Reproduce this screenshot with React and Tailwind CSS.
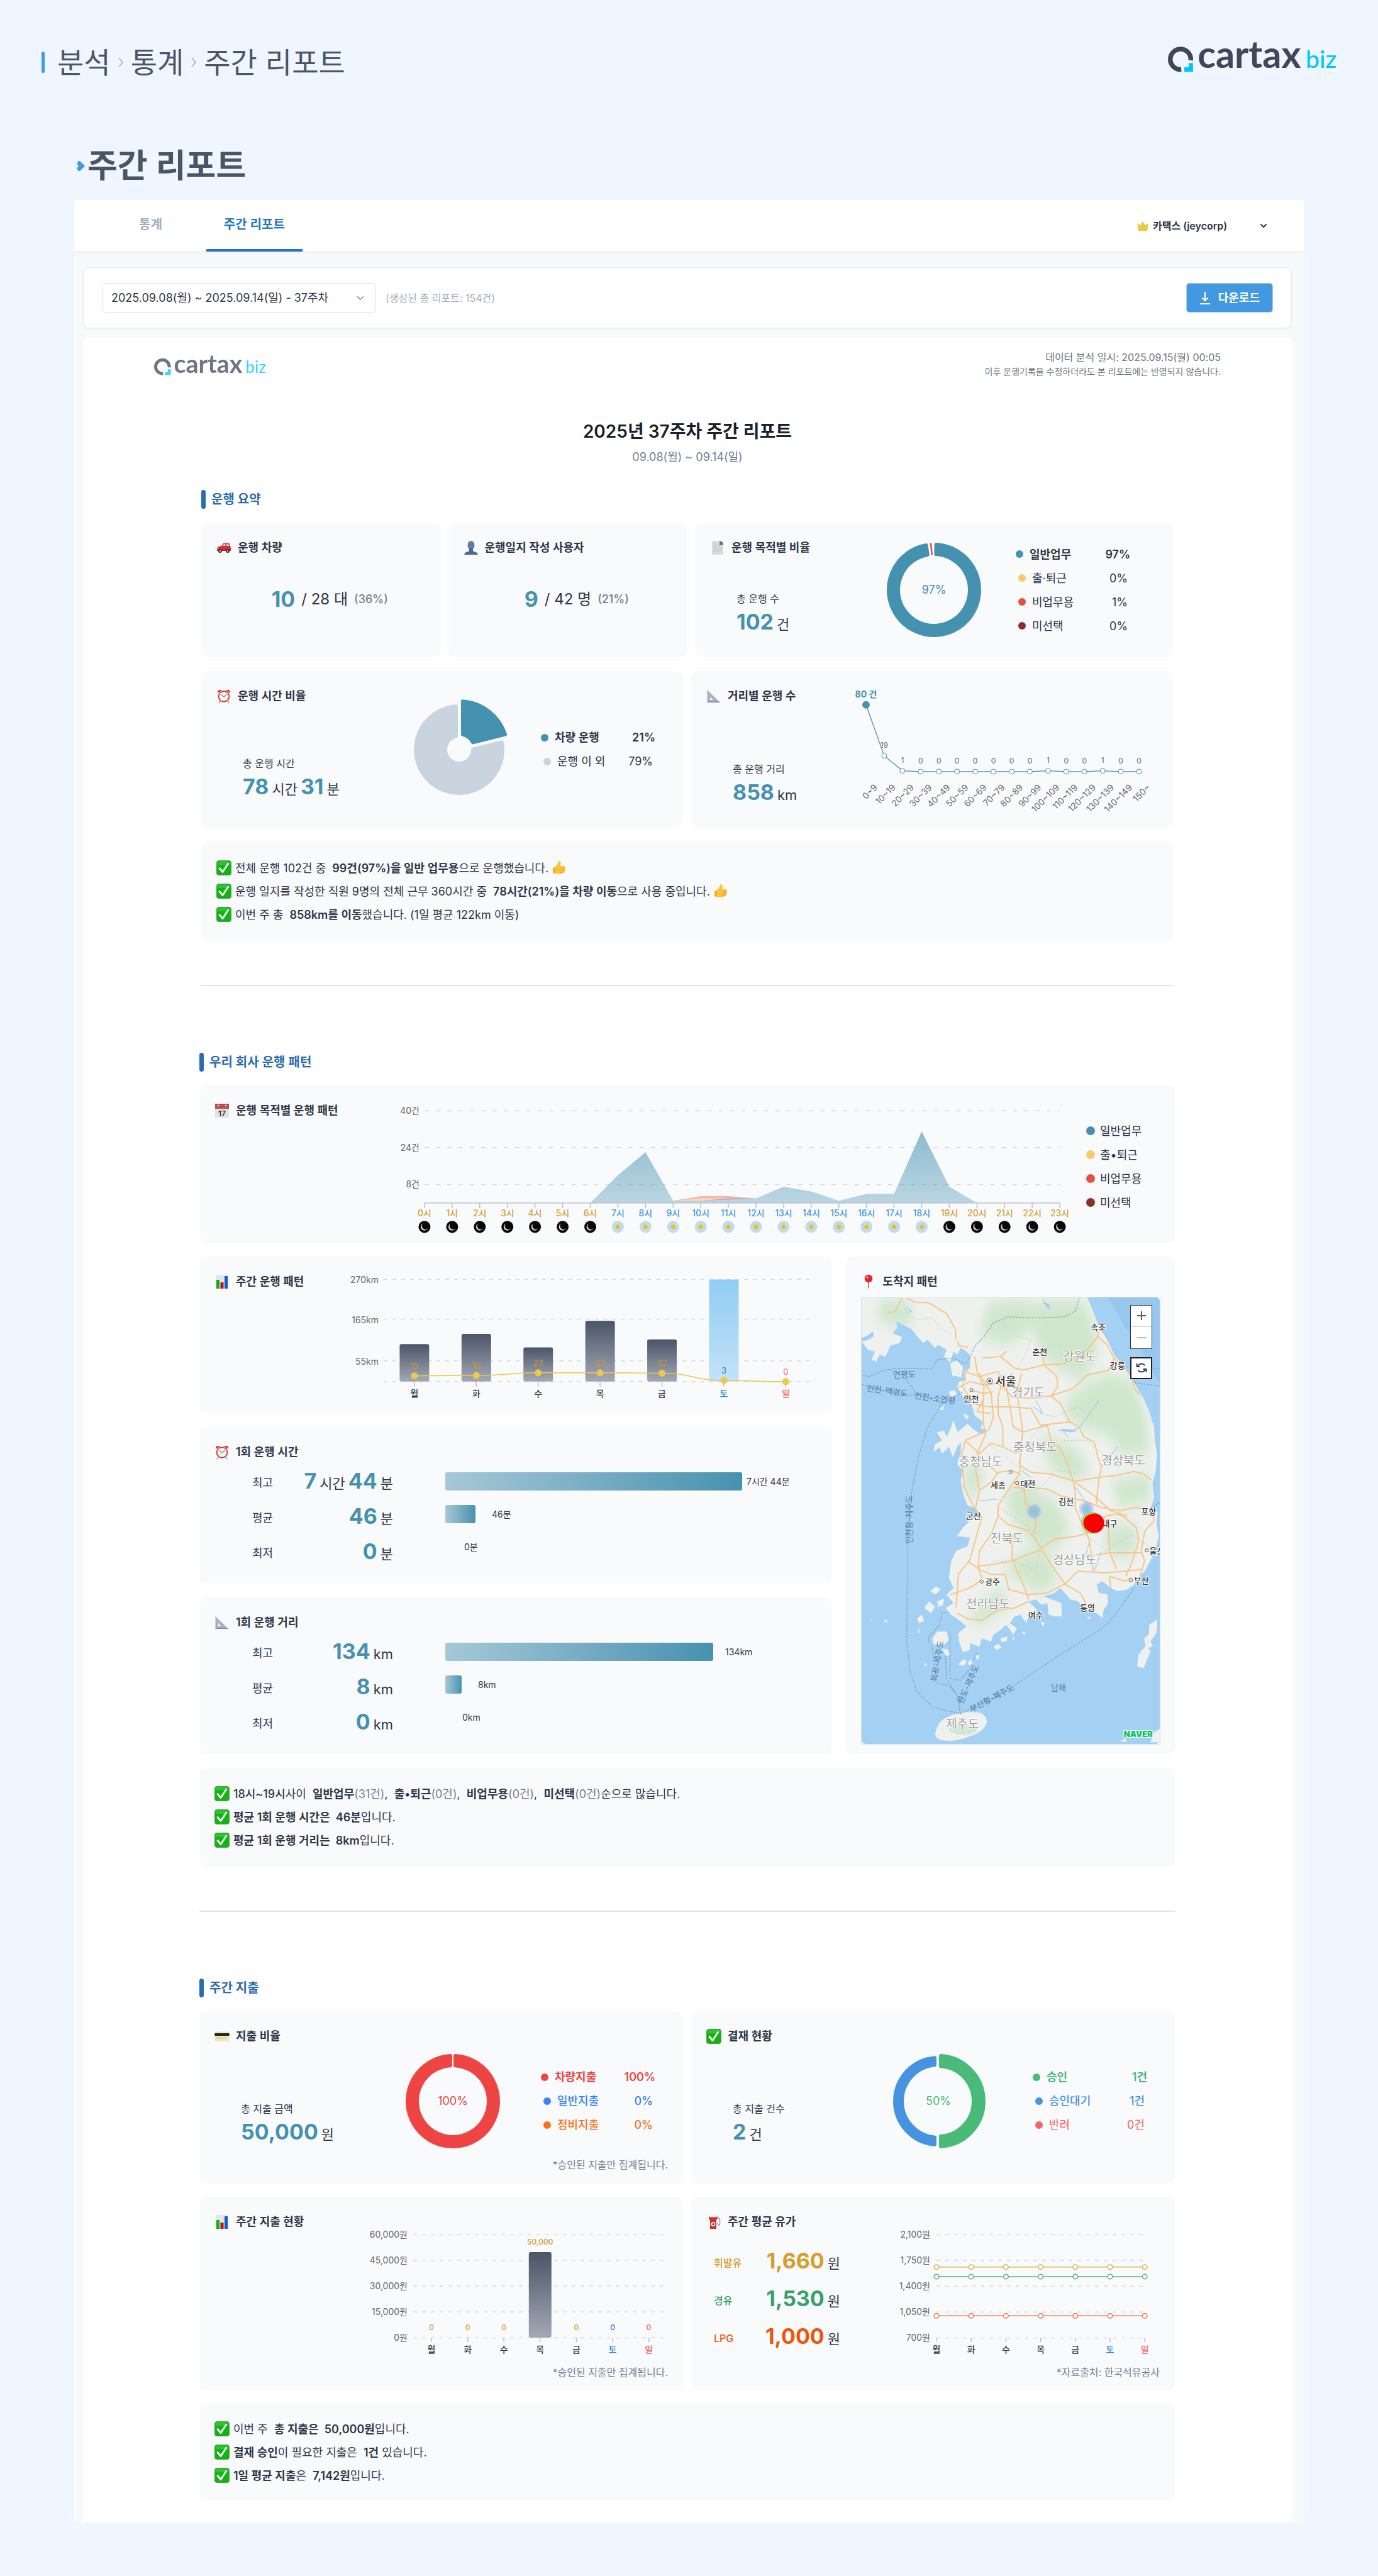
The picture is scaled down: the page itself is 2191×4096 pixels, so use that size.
import React, { useState } from "react";
import { ChevronDown } from "lucide-react";

const TEAL = "#4592b0";
const GRID = "#d9d9d9";
const days = ["월", "화", "수", "목", "금", "토", "일"];

const dayColor = (i, base = "#2d3748") =>
  i === 5 ? "#3182ce" : i === 6 ? "#f56565" : base;

/* ---------- icons ---------- */

const icons = {
  car: (
    <>
      <path d="M1 14q0-3 3-4l4-1 3-4q1-1 3-1h4q2 0 3 2l1 4q1 1 1 3v3q0 1-1 1H2q-1 0-1-1z" fill="#e8262a" />
      <path d="M9.500 9l2.500-3q.5-.7 1.500-.7h1V9zM16 5.300h1.700q1 0 1.500 1L20.500 9H16z" fill="#9fd4ee" />
      <path d="M1 15h22v1.500H1z" fill="#a8181b" />
      <circle cx="6" cy="17" r="3" fill="#2b2b2b" />
      <circle cx="6" cy="17" r="1.300" fill="#c9c9c9" />
      <circle cx="18" cy="17" r="3" fill="#2b2b2b" />
      <circle cx="18" cy="17" r="1.300" fill="#c9c9c9" />
      <circle cx="2.500" cy="13" r="1" fill="#ffe08a" />
    </>
  ),
  user: (
    <>
      <ellipse cx="12" cy="8" rx="5.500" ry="7" fill="#5b7fa6" />
      <path d="M9 13h6v3.500q0 1 2 1.500 5 1 6 5H1q1-4 6-5 2-.5 2-1.500z" fill="#48699a" />
    </>
  ),
  page: (
    <>
      <path d="M3 1h12l6 6v16H3z" fill="#dcdcdc" />
      <path d="M15 1q1 5-1 8 3-2 7-2 0-5-6-6z" fill="#6d6d6d" />
      <path d="M5 6h6M5 9h7M5 12h14M5 15h14M5 18h12" stroke="#bdbdbd" />
    </>
  ),
  clock: (
    <>
      <path d="M2 7q-1-4 3-5 3-.5 4 1zM22 7q1-4-3-5-3-.5-4 1z" fill="#d2352f" />
      <path d="M6 20l-2 3M18 20l2 3" stroke="#9c9c9c" strokeWidth="1.500" />
      <circle cx="12" cy="12.500" r="9.300" fill="#d2352f" />
      <circle cx="12" cy="12.500" r="7.500" fill="#f3f1ec" />
      <path d="M7.500 9.500L12 13l5-4" fill="none" stroke="#8a8a8a" strokeWidth="1.200" />
    </>
  ),
  ruler: (
    <>
      <path d="M1.500 2v20H22z M6 13l5 5H6z" fill="#a9b0c8" fillRule="evenodd" />
      <path d="M1.500 20.500h19L22 22H1.500z" fill="#83889f" />
    </>
  ),
  check: (
    <>
      <rect x="0.500" y="0.500" width="23" height="23" rx="3.500" fill="#12b312" stroke="#4f9d4f" />
      <path d="M1.500 4q0-2.500 2.500-2.500h16q2.500 0 2.500 2.500v3h-21z" fill="#3fd03f" opacity=".6" />
      <path d="M5 12.500l5 6 8.500-13" fill="none" stroke="#fff" strokeWidth="2.800" strokeLinecap="round" strokeLinejoin="round" />
    </>
  ),
  thumb: (
    <>
      <path d="M2 12q4-1 6-4t3-6q2-2 3.500.5.800 2-.5 6.500h5.500q2.500.3 2 2.500 1.200 1.500.2 3 .4 2-1 3-.2 2-1.700 2.500-5 2.500-10 1.500L2 20z" fill="#fdc33a" />
      <path d="M15 13h6M14.500 16h6M14 19h5" stroke="#dc9419" strokeWidth=".9" />
      <path d="M2 12l4-1.500V21.200L2 20z" fill="#f7ae27" />
    </>
  ),
  calendar: (
    <>
      <rect x="1" y="1" width="22" height="22" fill="#e2e2e2" />
      <path d="M1 1h22v8H1z" fill="#b9504f" />
      <circle cx="6" cy="4" r="1.300" fill="#f6dcdc" />
      <circle cx="18" cy="4" r="1.300" fill="#f6dcdc" />
      <text x="12" y="20.500" textAnchor="middle" fontSize="12" fontWeight="600" fill="#333">17</text>
    </>
  ),
  chart: (
    <>
      <path d="M2 1h20v22H2z" fill="#dfe8ef" />
      <path d="M3 9h5v14H3z" fill="#0fae13" />
      <path d="M9.500 13h5v10h-5z" fill="#c80f16" />
      <path d="M16 3h5v20h-5z" fill="#1559c9" />
    </>
  ),
  pin: (
    <>
      <path d="M11 10h2v12l-1 1.500-1-1.500z" fill="#9b8b80" />
      <circle cx="12" cy="7" r="6.300" fill="#e3282b" />
      <circle cx="10" cy="5" r="1.800" fill="#ff9c9c" />
    </>
  ),
  card: (
    <>
      <rect x="0.500" y="4.500" width="23" height="15" rx="1" fill="#efe6b8" />
      <path d="M.5 7h23v4H.5z" fill="#1d1d1d" />
      <path d="M3 14.500h16" stroke="#b5ad8d" strokeWidth="1.500" strokeDasharray="2 1" />
    </>
  ),
  fuel: (
    <>
      <path d="M4 2h13l1 5-2 2v14H6V9L4 7z" fill="#d42c30" />
      <path d="M4.500 2h12l.3 2.500H4.800z" fill="#eeeeee" />
      <circle cx="11" cy="15.500" r="3.300" fill="#fff" />
      <circle cx="11" cy="15.500" r="1.500" fill="#222" />
      <path d="M18 5q4 1 3.500 5v6q-1 2-2.500 1l-1.500-3" fill="none" stroke="#9a9a9a" strokeWidth="1.500" />
    </>
  ),
};

const Icon = ({ name, className = "" }) => (
  <svg viewBox="0 0 24 24" className={"w-6 h-6 shrink-0 " + className} aria-hidden="true">
    {icons[name]}
  </svg>
);

const Logo = ({ className }) => (
  <svg viewBox="12 11 329 100" className={"overflow-visible " + className} role="img" aria-label="cartax biz">
    <path d="M56.500 57.500A20 20 0 1 0 38 75.500" fill="none" stroke="#41465a" strokeWidth="9.200" />
    <path d="M52.500 63H61v17H44v-9h8.500z" fill="#00c6ff" />
    <text x="70" y="73" fontFamily="Lato, sans-serif" fontWeight="700" fontSize="73" fill="#41465a">
      cartax
    </text>
    <text x="281" y="73" fontFamily="Lato, sans-serif" fontWeight="500" fontSize="48" fill="#00c6ff">
      biz
    </text>
  </svg>
);

/* ---------- building blocks ---------- */

const CardTitle = ({ icon, children }) => (
  <h4 className="flex items-center gap-[10px] mt-[27px] h-[26px] text-[18px] leading-[26px] font-semibold text-[#2d3748] whitespace-nowrap">
    <Icon name={icon} />
    {children}
  </h4>
);

const SectionTitle = ({ children }) => (
  <h3 className="flex items-center gap-[9px] h-[30px] mb-[22px] text-[20px] leading-[30px] font-semibold text-[#2b6cb0]">
    <span className="w-[7px] h-full rounded-full bg-[#2b6cb0]" />
    {children}
  </h3>
);

const Num = ({ children, color = "text-[#4592b0]" }) => (
  <span className={"text-[34px] font-bold " + color}>{children}</span>
);

const Unit = ({ children }) => (
  <span className="text-[22px] text-[#2d3748] mx-[5px]">{children}</span>
);

const Stat = ({ label, className, children }) => (
  <div className={"pl-[42px] " + className}>
    <div className="text-[16px] leading-6 text-[#2d3748]">{label}</div>
    <div className="mt-[3px] leading-[44px] whitespace-nowrap">{children}</div>
  </div>
);

const Legend = ({ rows }) => (
  <ul className="w-[182px] shrink-0 text-[18px] text-[#2d3748]">
    {rows.map(([label, value, dot, text], i) => (
      <li
        key={label}
        className={
          "flex items-center gap-[10px] h-[38px] " +
          (i === 0 ? "font-semibold " : "px-1 ") +
          (text || "")
        }
      >
        <span className={"w-3 h-3 rounded-full " + dot} />
        <span>{label}</span>
        <span className="ml-auto">{value}</span>
      </li>
    ))}
  </ul>
);

const Summary = ({ className, children }) => (
  <ul
    className={
      "flex flex-col justify-center px-6 rounded-xl bg-[#f9fafc] text-[18px] text-[#2d3748] " +
      className
    }
  >
    {React.Children.map(children, (line) => (
      <li className="flex items-center gap-[6px] min-h-[37px]">
        <Icon name="check" />
        <span>{line}</span>
      </li>
    ))}
  </ul>
);

const Divider = () => <hr className="mt-[70px] mb-[106px] border-0 h-[2px] bg-[#e2e4e7]" />;

// Ring segment between two angles (degrees), pad is the inset in px on every side
const sector = (c, r0, r1, from, to, pad) => {
  const rad = (d) => ((d - 90) * Math.PI) / 180;
  const inner = r0 + 3;
  const outer = r1 - 3;
  const pt = (r, a) => `${c + r * Math.cos(a)} ${c + r * Math.sin(a)}`;
  const a = (r, d, s) => rad(d) + (s * pad) / r;
  const big = to - from > 180 ? 1 : 0;
  return `M${pt(outer, a(outer, from, 1))}A${outer} ${outer} 0 ${big} 1 ${pt(outer, a(outer, to, -1))}L${pt(inner, a(inner, to, -1))}A${inner} ${inner} 0 ${big} 0 ${pt(inner, a(inner, from, 1))}Z`;
};

const Donut = ({ segments, sliver, label, color }) => (
  <svg viewBox="0 0 160 160" className="w-40 h-40 shrink-0">
    {segments.map(([r0, r1, from, to, pad, fill]) => (
      <path
        key={from}
        d={sector(80, r0, r1, from, to, pad)}
        fill={fill}
        stroke={fill}
        strokeWidth="6"
        strokeLinejoin="round"
      />
    ))}
    {sliver && <path d="M75 5.500l1.800 19" stroke={sliver} strokeWidth="2.500" />}
    {label && (
      <text x="80" y="86" textAnchor="middle" fontSize="18" fill={color}>
        {label}
      </text>
    )}
  </svg>
);

/* ---------- charts ---------- */

const DistanceChart = () => {
  const counts = [80, 19, 1, 0, 0, 0, 0, 0, 0, 0, 1, 0, 0, 1, 0, 0];
  const labels = counts.map((_, i) =>
    i === 15 ? "150~" : i === 0 ? "0~9" : `${i * 10}~${i * 10 + 9}`
  );
  const x = (i) => 27 + i * 29;
  const y = (v) => 160 - v * 1.33;
  return (
    <svg viewBox="0 0 500 249" className="flex-1 min-w-0">
      <polyline
        points={counts.map((v, i) => `${x(i)},${y(v)}`).join(" ")}
        fill="none"
        stroke={TEAL}
        strokeWidth="1.300"
      />
      {counts.map((v, i) => (
        <g key={i}>
          <circle cx={x(i)} cy={y(v)} r={i ? 4 : 5.5} fill={i ? "#fff" : TEAL} stroke={TEAL} />
          <text
            x={x(i)}
            y={y(v) - (i ? 13 : 12)}
            textAnchor="middle"
            fontSize={i ? 12 : 14}
            fontWeight={i ? 400 : 700}
            fill={i ? "#666" : TEAL}
          >
            {i ? v : "80 건"}
          </text>
          <text
            transform={`translate(${x(i) + 19} 186) rotate(-45)`}
            textAnchor="end"
            fontSize="14"
            fill="#6b6b6b"
          >
            {labels[i]}
          </text>
        </g>
      ))}
    </svg>
  );
};

const PurposeChart = () => {
  const work = [0, 0, 0, 0, 0, 0, 0, 12, 22, 1, 1, 2, 2, 7, 5, 1, 4, 4, 31, 7, 0, 0, 0, 0];
  const x = (i) => 55 + i * 43.96;
  const y = (v) => 187 - v * 3.675;
  const area = work.map((v, i) => `${x(i)},${y(v)}`).join(" ");
  const night = (i) => i < 7 || i > 18;
  return (
    <svg viewBox="0 0 1100 250" className="flex-1 min-w-0">
      <defs>
        <linearGradient id="work" x1="0" y1="0" x2="0" y2="1">
          <stop offset="0" stopColor="#4592b0" stopOpacity=".6" />
          <stop offset="1" stopColor="#4592b0" stopOpacity=".35" />
        </linearGradient>
      </defs>
      {[40, 24, 8].map((v) => (
        <g key={v}>
          <path d={`M55 ${y(v)}H1066`} stroke={GRID} strokeWidth="1.500" strokeDasharray="7 11" />
          <text x="47" y={y(v) + 5} textAnchor="end" fontSize="14" fill="#666">
            {v}건
          </text>
        </g>
      ))}
      <polygon points={`${x(9)},${y(1)} ${x(10)},${y(3)} ${x(11)},${y(3)} ${x(12)},${y(2)} ${x(10)},${y(1)}`} fill="#f3b9b2" />
      <polygon points={`${x(9)},${y(1)} ${x(10)},${y(2)} ${x(11)},${y(2)} ${x(10)},${y(1)}`} fill="#fbdcae" />
      <polygon points={`${area} ${x(23)},187 ${x(0)},187`} fill="url(#work)" />
      <path d="M55 187H1066" stroke="#b9bfcc" strokeWidth="1.500" />
      {work.map((_, i) => (
        <g key={i}>
          <path d={`M${x(i)} 187v8`} stroke="#b9bfcc" strokeWidth="1.500" />
          <text
            x={x(i)}
            y="208"
            textAnchor="middle"
            fontSize="14"
            fontWeight="500"
            fill={night(i) ? "#d69e2e" : "#4299e1"}
          >
            {i}시
          </text>
          {night(i) ? (
            <g transform={`translate(${x(i)} 225)`}>
              <circle r="9.500" fill="#05060f" />
              <path d="M-2.500-5.500A6 6 0 1 0 5.500 2.500 5 5 0 0 1-2.500-5.500z" fill="#f0d78c" />
            </g>
          ) : (
            <g transform={`translate(${x(i)} 225)`}>
              <circle r="9.500" fill="#b5dcfa" />
              <circle r="5.800" fill="none" stroke="#f5d98a" strokeWidth="2.500" strokeDasharray="1.500 3.050" />
              <circle r="3.400" fill="#fbb916" />
            </g>
          )}
        </g>
      ))}
    </svg>
  );
};

const WeekChart = () => {
  const km = [99, 126, 90.5, 160.5, 111.5, 270, 0];
  const trips = [15, 16, 23, 23, 22, 3, 0];
  const x = (i) => 119 + i * 98.5;
  const y = (v) => 199 - v * 0.602;
  const py = (v) => 199 - v * 0.61;
  const line = trips.reduce((d, v, i) => {
    if (!i) return `M${x(0)} ${py(v)}`;
    const m = (x(i) + x(i - 1)) / 2;
    return `${d}C${m} ${py(trips[i - 1])} ${m} ${py(v)} ${x(i)} ${py(v)}`;
  }, "");
  return (
    <svg viewBox="0 0 760 249" className="flex-1 min-w-0">
      <defs>
        <linearGradient id="dark" x1="0" y1="0" x2="0" y2="1">
          <stop offset="0" stopColor="#4a5568" />
          <stop offset="1" stopColor="#a3a8b4" />
        </linearGradient>
        <linearGradient id="sky" x1="0" y1="0" x2="0" y2="1">
          <stop offset="0" stopColor="#90cdf4" />
          <stop offset="1" stopColor="#c3e2f7" />
        </linearGradient>
      </defs>
      {[270, 165, 55, 0].map((v) => (
        <g key={v}>
          <path d={`M70 ${y(v)}H757`} stroke={GRID} strokeWidth="1.500" strokeDasharray="6 8" />
          {v > 0 && (
            <text x="62" y={y(v) + 6} textAnchor="end" fontSize="14" fill="#666">
              {v}km
            </text>
          )}
        </g>
      ))}
      {days.map((d, i) => (
        <g key={d}>
          <path d={`M${x(i)} 199v8`} stroke="#b9bfcc" strokeWidth="1.500" />
          {km[i] > 0 && (
            <rect
              x={x(i) - 23.5}
              y={y(km[i])}
              width="47"
              height={199 - y(km[i])}
              rx="3"
              fill={i === 5 ? "url(#sky)" : "url(#dark)"}
            />
          )}
          <text x={x(i)} y="223" textAnchor="middle" fontSize="14" fontWeight="500" fill={dayColor(i)}>
            {d}
          </text>
        </g>
      ))}
      <path d={line} fill="none" stroke="#ecc94b" strokeWidth="1.500" />
      {trips.map((v, i) => (
        <g key={i}>
          <circle cx={x(i)} cy={py(v)} r="5.500" fill="#ecc94b" />
          <text x={x(i)} y={py(v) - 11} textAnchor="middle" fontSize="13" fill={dayColor(i, "#c9973a")}>
            {v}
          </text>
        </g>
      ))}
    </svg>
  );
};

const SpendChart = () => {
  const x = (i) => 106 + i * 57.6;
  return (
    <svg viewBox="0 0 482 267" className="w-full">
      {["60,000", "45,000", "30,000", "15,000", "0"].map((v, i) => (
        <g key={v}>
          <path d={`M77 ${60 + i * 41}H480`} stroke={GRID} strokeWidth="1.500" strokeDasharray="6 8" />
          <text x="68" y={65 + i * 41} textAnchor="end" fontSize="14" fill="#666">
            {v}원
          </text>
        </g>
      ))}
      <rect x={x(3) - 18} y="88" width="36" height="136" rx="3" fill="url(#dark)" />
      {days.map((d, i) => (
        <g key={d}>
          <path d={`M${x(i)} 224v7`} stroke="#b9bfcc" strokeWidth="1.500" />
          <text
            x={x(i)}
            y={i === 3 ? 76 : 212}
            textAnchor="middle"
            fontSize="12"
            fontWeight="500"
            fill={dayColor(i, "#d69e2e")}
          >
            {i === 3 ? "50,000" : "0"}
          </text>
          <text x={x(i)} y="248" textAnchor="middle" fontSize="14" fontWeight="500" fill={dayColor(i)}>
            {d}
          </text>
        </g>
      ))}
    </svg>
  );
};

const FuelChart = () => {
  const x = (i) => 81 + i * 55.2;
  const y = (v) => 224.4 - (v - 700) * 0.1174;
  const series = [
    [1660, "#e2b04d"],
    [1530, "#58b47f"],
    [1000, "#ee7a4a"],
  ];
  return (
    <svg viewBox="0 0 436 267" className="w-full">
      {[2100, 1750, 1400, 1050, 700].map((v) => (
        <g key={v}>
          <path d={`M81 ${y(v)}H412`} stroke={GRID} strokeWidth="1.500" strokeDasharray="6 8" />
          <text x="71" y={y(v) + 5} textAnchor="end" fontSize="14" fill="#666">
            {v.toLocaleString("en-US")}원
          </text>
        </g>
      ))}
      {series.map(([v, color]) => (
        <g key={v} stroke={color} strokeWidth="1.500">
          <path d={`M81 ${y(v)}H412`} />
          {days.map((d, i) => (
            <circle key={d} cx={x(i)} cy={y(v)} r="3.800" fill="#fff" />
          ))}
        </g>
      ))}
      {days.map((d, i) => (
        <g key={d}>
          <path d={`M${x(i)} 224v7`} stroke="#b9bfcc" strokeWidth="1.500" />
          <text x={x(i)} y="248" textAnchor="middle" fontSize="14" fontWeight="500" fill={dayColor(i)}>
            {d}
          </text>
        </g>
      ))}
    </svg>
  );
};

/* ---------- map ---------- */

const land =
  "M138 174H1100L1125 215 1150 262 1185 300 1215 345 1250 375 1285 410 1310 440 1340 475 1365 515 1385 560 1388 600 1398 640 1392 690 1378 730 1385 770 1372 800 1400 815 1395 850 1405 885 1390 930 1368 960 1345 990 1325 1005 1300 1030 1270 1045 1230 1050 1200 1040 1165 1020 1140 1030 1150 1055 1185 1058 1190 1085 1170 1105 1165 1130 1140 1115 1120 1112 1080 1095 1060 1080 1030 1075 1010 1060 985 1040 960 1055 915 1065 950 1075 990 1085 992 1125 965 1125 935 1120 930 1085 905 1090 880 1075 850 1080 885 1105 880 1130 850 1125 840 1145 815 1120 790 1125 770 1145 800 1160 785 1180 755 1150 730 1165 700 1180 690 1200 650 1190 640 1215 600 1205 600 1225 570 1232 555 1205 550 1175 585 1155 560 1140 520 1120 495 1100 530 1085 500 1060 530 1040 510 1010 520 960 540 930 590 915 600 890 545 885 570 860 600 840 640 825 620 800 590 795 570 760 560 720 570 690 545 670 560 640 562 605 545 620 528 650 510 620 480 640 470 620 445 635 450 612 480 600 458 575 490 572 500 590 520 560 528 540 548 575 590 550 610 565 640 580 665 575 680 570 645 565 655 545 620 525 610 500 600 480 570 470 545 440 555 425 585 420 575 395 600 382 600 345 575 330 560 325 545 345 530 335 515 368 490 350 500 330 465 315 450 325 420 300 400 310 375 290 350 268 300 250 285 245 290 265 270 280 310 292 300 310 260 318 240 350 215 345 200 365 180 360 195 335 165 330 138 305 170 300 190 290 185 275 170 285 138 295Z";

const islands =
  "M515 370l30-8 25 20 -5 30-40-5zM470 505l20-8-5 14zM510 455l25-5 10 15-25 5zM570 520l25 8-10 12zM440 1190l20-20 40 0 10 25-20 15-45-2zM405 1100l20-20 25 15-15 20zM375 1130l20-10 10 18-22 8zM430 1050l25-15 20 10-20 14zM460 1080l30-8-5 20-20 5zM590 1262l15-8 12 10-18 8zM620 1242l20-2-6 16zM700 1215l20-8 15 10-22 8zM730 1190l30-5-4 14-22 2zM550 1268l22-16 15 8-14 12zM480 1220l25 4 10 15-18 4zM900 1140l20 4-8 12zM820 1170l18 3-6 8zM230 1140l14-6 5 10zM170 1133l8 0 0 6zM405 1262l12 6-10 6zM1240 1495l28-6-6 12zM1370 1500l15-30 24-10v40zM1365 1150l34-16-4 40-25 25 10 15-20 5 10 10-30 50-27-5 5-35 30-25-5-25 20-10zM1100 1125l14 2-6 8zM780 1185l12 4-8 6zM380 1160l8 8-6 8z";

const hills = [
  "M980 180L1100 190 1150 330 1080 420 1000 400 900 340 860 250 880 190Z",
  "M1020 470L1180 400 1290 420 1350 520 1360 640 1260 650 1180 580 1100 570 1000 520Z",
  "M680 190L860 180 870 260 760 320 640 290Z",
  "M1200 720L1360 700 1370 780 1240 800Z",
  "M820 720L960 780 1030 860 960 930 860 910 770 820 750 760Z",
  "M800 940L920 930 980 1010 900 1060 820 1020 740 1000Z",
  "M1170 860L1320 850 1290 950 1190 940Z",
  "M900 580L1050 620 1120 700 1020 720 930 670Z",
  "M220 180L360 190 340 270 200 240Z",
  "M580 1130L720 1040 780 1090 640 1150Z",
  "M570 700L630 650 660 720 600 780Z",
];

const roads =
  "M248 223L282 215 308 176M332 176L365 188 425 190 500 222 538 270 540 298M548 303L552 318 592 322M620 350L630 395 660 440 655 500 658 555 668 580 630 640 690 680 720 700M650 355L730 350 755 335M730 350L790 385 830 390 915 375 910 345M915 375L1000 372 1100 330 1145 290 1145 265M1145 290L1185 315 1215 355 1260 385 1290 410 1300 445 1325 465M915 375L970 410 975 440 945 468 985 490 1025 545 1065 560 1085 590 1130 605 1145 650 1160 680 1150 715 1138 790M945 468L1040 445 1100 405 1190 392 1215 355M580 395L640 410 720 395 740 420 720 470 720 520 740 560 740 620M545 445L600 425 660 435 720 430 780 470 860 475 945 468M600 380L580 400 570 440 610 490 680 500 770 500 860 505 900 555 1025 545M780 400L755 440 770 500 785 560 825 575 930 555 945 600 985 625 1010 660 1040 720 1050 760 1048 800 1085 860 1110 900 1125 990M820 400L800 460 815 520 825 575 815 640 812 700 785 725 720 795 720 825 690 880 640 930 635 980 650 1010M600 450L660 460 700 455M640 400L690 460 700 530 680 570M655 480L630 515 690 520M580 600L640 640 690 608 740 620 800 640M580 600L630 585 665 575M580 600L565 640 570 690 575 740 610 790 640 820 650 830 600 955 550 1000 545 1060 540 1100M625 690L640 750 690 725 720 695 780 690 812 700M625 690L620 650M640 750L625 800M812 675L860 695 940 700 1045 722 1150 710 1220 705 1300 693 1340 700 1372 718M785 725L830 745 840 790 880 820 880 860 870 880M785 740L930 745 985 765 1085 780 1160 800 1240 810 1300 800 1375 805M1048 725L1130 765 1200 810 1270 825M720 825L760 850 850 870 905 920 960 895 1060 885 1130 870 1180 825 1230 820 1260 830 1310 860 1320 900 1290 965 1265 1005M905 925L830 945 780 960 700 970 635 975M905 925L950 975 1005 1028 1070 1055 1095 1085M780 880L780 955 830 1035 850 1075M590 960L640 985 690 1000 750 1000 765 1045 850 1060 930 1055 1005 1028 1060 990 1170 995 1265 990 1330 985M515 1060L600 1040 650 1015M545 1115L590 1132 650 1137 720 1105 790 1100 850 1080M1190 850L1195 930 1225 985M1100 945L1200 935 1330 935 1345 870 1385 840 1380 800M1330 930L1345 960 1325 1005M1200 1040L1195 1005 1260 1020 1290 1010";

const routes =
  "M138 405L170 410 240 390 300 385 440 385 460 360 530 355 580 372 600 355 620 320 660 290 700 250 760 232 900 235 1000 232 1050 215 1066 176M138 433L230 452 330 465 380 465M330 420L370 460 480 490 570 455M480 490L420 560 380 650 350 760 335 900 332 1060 330 1200 345 1290 375 1350 440 1395 558 1415 700 1370 780 1335 960 1250 1170 1158 1230 1110 1300 1040M558 1415L555 1370 510 1330 460 1325 440 1220 420 1190 470 1150 480 1115 510 1112M558 1415L545 1360 500 1310 495 1240M515 1310L560 1315 600 1280 630 1230M515 1310L515 1170M1240 380L1409 387M1300 428L1409 438M1380 800L1409 785";

const mapX = (x) => (x - 138) * 0.3739;
const mapY = (y) => (y - 174) * 0.5349;

const provinces = [
  ["강원도", 1067, 351],
  ["경기도", 849, 457],
  ["충청북도", 878, 621],
  ["충청남도", 646, 663],
  ["경상북도", 1254, 660],
  ["전북도", 758, 892],
  ["경상남도", 1046, 955],
  ["전라남도", 677, 1087],
  ["제주도", 568, 1445],
];

const cities = [
  ["속초", 1147, 262],
  ["춘천", 898, 336],
  ["강릉", 1229, 377],
  ["인천", 606, 475],
  ["세종", 720, 733],
  ["대전", 847, 729],
  ["김천", 1010, 781],
  ["군산", 615, 824],
  ["포항", 1362, 811],
  ["대구", 1196, 848],
  ["울산", 1397, 929],
  ["부산", 1331, 1018],
  ["광주", 696, 1021],
  ["통영", 1101, 1098],
  ["여수", 880, 1120],
];

const seaLabels = [
  ["연평도", 320, 402, 0],
  ["인천-백령도", 247, 452, 8],
  ["인천-소연평", 451, 474, 8],
  ["인천항-제주도", 340, 836, -90],
  ["목포-제주도", 460, 1258, -80],
  ["완도-제주도", 592, 1327, -66],
  ["부산항-제주도", 693, 1368, -28],
  ["남해", 978, 1336, 0],
];

const KoreaMap = () => (
  <div className="relative mt-[11px] border border-[#dcdfe3] bg-white">
    <svg viewBox="0 0 475 712" className="block w-full rounded-md bg-[#a3d0f3]">
      <defs>
        <filter id="soft" x="-30%" y="-30%" width="160%" height="160%">
          <feGaussianBlur stdDeviation="22" />
        </filter>
        <clipPath id="landClip">
          <path d={land} />
        </clipPath>
        <radialGradient id="spot">
          <stop offset="0" stopColor="#6be08a" />
          <stop offset=".3" stopColor="#7cc4e0" stopOpacity=".85" />
          <stop offset=".6" stopColor="#9aa2f4" stopOpacity=".6" />
          <stop offset="1" stopColor="#8a93f2" stopOpacity="0" />
        </radialGradient>
        <radialGradient id="hot">
          <stop offset=".74" stopColor="#ff0000" />
          <stop offset=".8" stopColor="#f6e61c" />
          <stop offset=".88" stopColor="#6fe06a" />
          <stop offset="1" stopColor="#58b7f0" stopOpacity="0" />
        </radialGradient>
      </defs>
      <g transform="scale(.3739 .5349) translate(-138 -174)">
        <path d="M1190 174H1409V430L1330 330 1250 250Z" fill="#96c7ef" />
        <path d={land} fill="#eff1ef" />
        <path d={islands} fill="#eff1ef" />
        <g clipPath="url(#landClip)">
          <g filter="url(#soft)" fill="#cfe6cc">
            {hills.map((d) => (
              <path key={d} d={d} />
            ))}
          </g>
          <g fill="none" stroke="#c5c9c6" strokeWidth="1" strokeDasharray="3 2">
            <path vectorEffect="non-scaling-stroke" d="M310 176L330 220 370 240 440 235 470 260 520 290M740 250L800 290 860 300 840 340 800 390M900 520L960 530 1060 500 1130 540M1000 600L1100 600 1180 650M680 610L740 640 800 680 830 620 900 560M780 760L900 740 970 690 1060 700M720 800L790 830 870 870 900 930 880 990 800 960 700 960 620 1040M1060 860L1180 930 1290 880 1370 920" />
          </g>
          <g fill="none" stroke="#9ccdf2" strokeWidth="1.200">
            <path vectorEffect="non-scaling-stroke" d="M910 180L940 210 920 200M330 205L350 215 335 220M880 480L910 520 870 500M975 570L1030 575 1070 560 1100 530 1150 480M1000 575L1020 590M820 690L860 710M1050 740L1100 790 1080 840 1110 900 1090 950M1160 680L1230 620M640 780L720 775M1160 930L1130 990" />
            <path strokeWidth="3" vectorEffect="non-scaling-stroke" d="M915 190L940 200M990 568L1050 572" />
          </g>
        </g>
        <path
          d="M452 1478Q455 1440 505 1424 560 1405 640 1412 672 1420 672 1440 660 1470 600 1482 540 1500 480 1494 455 1490 452 1478Z"
          fill="#eff1ef"
        />
        <ellipse cx="570" cy="1462" rx="60" ry="16" fill="#d3e8d0" />
        <path d={roads} fill="none" stroke="#f6c688" strokeWidth="2" strokeLinejoin="round" vectorEffect="non-scaling-stroke" />
        <path d={routes} fill="none" stroke="#7e9dba" strokeWidth="1.200" strokeDasharray="3 2" vectorEffect="non-scaling-stroke" />
      </g>
      <g textAnchor="middle">
        <g fontSize="19" fill="#9b9b9b" stroke="#ffffff" strokeWidth="2" paintOrder="stroke">
          {provinces.map(([name, x, y]) => (
            <text key={name} x={mapX(x)} y={mapY(y) + 7}>
              {name}
            </text>
          ))}
        </g>
        <g fontSize="13" fill="#55779a">
          {seaLabels.map(([name, x, y, angle]) => (
            <text key={name} transform={`translate(${mapX(x)} ${mapY(y)}) rotate(${angle})`} y="5">
              {name}
            </text>
          ))}
        </g>
        <g fontSize="13" fontWeight="500" fill="#333" stroke="#ffffff" strokeWidth="2" paintOrder="stroke">
          {cities.map(([name, x, y]) => (
            <text key={name} x={mapX(x)} y={mapY(y) + 5}>
              {name}
            </text>
          ))}
          <text x={mapX(752)} y={mapY(424) + 7} fontSize="18">
            서울
          </text>
        </g>
      </g>
      <g fill="#fff" stroke="#444">
        {[[606, 450], [773, 695], [801, 727], [650, 1021], [1354, 928], [1286, 1017]].map(([x, y]) => (
          <circle key={x} cx={mapX(x)} cy={mapY(y)} r="2.500" />
        ))}
        <circle cx={mapX(684)} cy={mapY(423)} r="4.500" />
        <circle cx={mapX(684)} cy={mapY(423)} r="1.800" fill="#444" />
      </g>
      <circle cx={mapX(873)} cy={mapY(812)} r="13" fill="url(#spot)" />
      <circle cx={mapX(1097)} cy={mapY(804)} r="13" fill="url(#spot)" />
      <circle cx={mapX(1120)} cy={mapY(846)} r="18" fill="url(#hot)" />
      <circle cx={mapX(1131)} cy={mapY(847)} r="15.500" fill="#ff0000" />
      <text x="441" y="701" textAnchor="middle" fontSize="13" fontWeight="900" fill="#03c75a" stroke="#fff" strokeWidth="2" paintOrder="stroke">
        NAVER
      </text>
    </svg>
    <div className="absolute top-3 right-3 w-[35px] border border-[#333] bg-white">
      <button type="button" aria-label="확대" className="flex items-center justify-center w-full h-[34px] border-b border-[#ccc]">
        <svg viewBox="0 0 14 14" className="w-[14px] h-[14px]">
          <path d="M7 0v14M0 7h14" stroke="#555" strokeWidth="2" />
        </svg>
      </button>
      <button type="button" aria-label="축소" className="flex items-center justify-center w-full h-[34px]">
        <svg viewBox="0 0 14 14" className="w-[14px] h-[14px]">
          <path d="M0 7h14" stroke="#bbb" strokeWidth="2" />
        </svg>
      </button>
    </div>
    <button
      type="button"
      aria-label="새로고침"
      className="absolute top-[95px] right-3 flex items-center justify-center w-[35px] h-[35px] border-2 border-[#222] bg-white"
    >
      <svg viewBox="0 0 18 18" className="w-[18px] h-[18px]" fill="none" stroke="#2d3748" strokeWidth="1.800">
        <path d="M1.500 2v5h5M16.500 16v-5h-5" />
        <path d="M2 7q3-4.500 7-4.500 3 0 5.500 2.500M16 11q-3 4.500-7 4.500-3 0-5.500-2.500" />
      </svg>
    </button>
  </div>
);

/* ---------- 1회 운행 ---------- */

const RunCard = ({ icon, title, values, bars }) => (
  <article className="min-h-[249px] px-6 rounded-xl bg-[#f9fafc]">
    <CardTitle icon={icon}>{title}</CardTitle>
    <div className="flex gap-[83px] mt-2 pl-[60px]">
      <dl className="w-[224px] shrink-0 text-[18px] text-[#2d3748]">
        {["최고", "평균", "최저"].map((name, i) => (
          <div key={name} className="flex items-center justify-between h-14">
            <dt>{name}</dt>
            <dd className="leading-[44px] -mr-[5px] whitespace-nowrap">{values[i]}</dd>
          </div>
        ))}
      </dl>
      <ul className="flex-1 text-[14px] text-[#2d3748]">
        {bars.map(([width, gap, label]) => (
          <li key={label} className="flex items-center h-[52px]">
            <span
              className="h-[29px] rounded-[3px] bg-linear-to-r from-[#a6c8d7] to-[#4592b0]"
              style={{ width }}
            />
            <span style={{ marginLeft: gap }}>{label}</span>
          </li>
        ))}
      </ul>
    </div>
  </article>
);

const App = () => {
  const [tab, setTab] = useState("report");

  const tabClass = (name) =>
    "h-full px-7 text-[20px] font-semibold border-b-4 " +
    (tab === name ? "border-[#2176cc] text-[#2176cc]" : "border-transparent text-[#a0aec0]");

  return (
    <div className="min-h-screen bg-[#eff6ff] pb-[83px] font-['Inter','Noto_Sans_CJK_KR',sans-serif] text-[#2d3748]">
      <header className="flex items-center justify-between h-[198px] px-[66px]">
        <nav className="flex items-center text-[46px] leading-[60px] text-[#4a5568]">
          <span className="w-[5px] h-[34px] mr-5 rounded-full bg-[#4299e1]" />
          <a href="#analysis">분석</a>
          <svg viewBox="0 0 8 16" className="w-2 h-4 mx-3" fill="none" stroke="#a0aec0" strokeWidth="1.500">
            <path d="M1 1l6 7-6 7" />
          </svg>
          <a href="#stats">통계</a>
          <svg viewBox="0 0 8 16" className="w-2 h-4 mx-3" fill="none" stroke="#a0aec0" strokeWidth="1.500">
            <path d="M1 1l6 7-6 7" />
          </svg>
          <span>주간 리포트</span>
        </nav>
        <Logo className="w-[268px]" />
      </header>

      <h1 className="flex items-center gap-1 h-[120px] pt-3 pl-[122px] text-[52px] leading-[60px] font-semibold text-[#4a5568]">
        <svg viewBox="0 0 13 16" className="w-[13px] h-4">
          <path d="M0 4l3-4h2l8 8-8 8H3l-3-4 3-4z" fill="#4299e1" />
        </svg>
        주간 리포트
      </h1>

      <main className="mx-[118px] bg-[#f8f9fa]">
        <div className="flex items-center justify-between h-[83px] pl-[75px] pr-[56px] bg-white border-b border-[#e0e2e4] shadow-xs">
          <div role="tablist" className="flex gap-[42px] h-full">
            <button type="button" role="tab" aria-selected={tab === "stats"} className={tabClass("stats")} onClick={() => setTab("stats")}>
              통계
            </button>
            <button type="button" role="tab" aria-selected={tab === "report"} className={tabClass("report")} onClick={() => setTab("report")}>
              주간 리포트
            </button>
          </div>
          <div className="relative flex items-center gap-[7px]">
            <svg viewBox="0 0 18 15" className="w-[18px] h-[15px]">
              <path d="M0 3l5 3 4-6 4 6 5-3-2 12H2z" fill="#ecc94b" />
            </svg>
            <select aria-label="계정" className="w-[184px] appearance-none bg-transparent text-[16px] leading-6 font-semibold">
              <option>카택스 (jeycorp)</option>
            </select>
            <ChevronDown className="absolute right-0 w-4 h-4 pointer-events-none" strokeWidth={3} />
          </div>
        </div>

        <div className="pl-[14px] pr-[19px] pt-6">
          <div className="flex items-center justify-between h-[97px] px-[29px] rounded-lg border border-[#e5e7e9] bg-white shadow-xs">
            <div className="flex items-center gap-[15px]">
              <div className="relative flex items-center">
                <select aria-label="주차" className="w-[436px] h-[47px] pl-[14px] appearance-none rounded-md border border-[#e0e2e5] bg-white text-[18px]">
                  <option>2025.09.08(월) ~ 2025.09.14(일) - 37주차</option>
                </select>
                <ChevronDown className="absolute right-4 w-[18px] h-[18px] text-[#6b7280] pointer-events-none" strokeWidth={1.500} />
              </div>
              <span className="text-[16px] text-[#a0aec0]">(생성된 총 리포트: 154건)</span>
            </div>
            <button type="button" className="flex items-center gap-3 h-[47px] px-5 rounded-[5px] border border-[#b3cde6] bg-[#4299e1] text-[18px] font-semibold text-white">
              <svg viewBox="0 0 18 20" className="w-[18px] h-5" fill="none" stroke="currentColor" strokeWidth="2">
                <path d="M9 0v14M4.500 9.500L9 14l4.500-4.500M1 19h16" />
              </svg>
              다운로드
            </button>
          </div>

          <div className="mt-[15px] pt-5 pb-[35px] rounded-t-lg bg-white">
            <div className="flex items-start justify-between px-[113px]">
              <Logo className="w-[178px] mt-[2px] opacity-75" />
              <div className="text-right text-[#6b7280]">
                <p className="text-[16px] leading-[22px]">데이터 분석 일시: 2025.09.15(월) 00:05</p>
                <p className="text-[14px] leading-6">이후 운행기록을 수정하더라도 본 리포트에는 반영되지 않습니다.</p>
              </div>
            </div>

            <h2 className="mt-[53px] text-center text-[28px] leading-10 font-semibold text-[#1a202c]">
              2025년 37주차 주간 리포트
            </h2>
            <p className="mt-[9px] text-center text-[18px] leading-6 text-[#718096]">09.08(월) ~ 09.14(일)</p>

            {/* 운행 요약 */}
            <section className="mt-10 px-[188px]">
              <SectionTitle>운행 요약</SectionTitle>
              <div className="flex flex-col gap-[22px]">
                <div className="grid grid-cols-[1fr_1fr_2fr] gap-3 min-h-[214px]">
                  <article className="flex flex-col px-6 pb-6 rounded-xl bg-[#f9fafc]">
                    <CardTitle icon="car">운행 차량</CardTitle>
                    <p className="flex-1 flex items-center justify-center pl-7 text-[24px] leading-[44px]">
                      <Num>10</Num>
                      <span className="mx-[10px]">/ 28 대</span>
                      <span className="text-[18px] font-medium text-[#718096]">(36%)</span>
                    </p>
                  </article>
                  <article className="flex flex-col px-6 pb-6 rounded-xl bg-[#f9fafc]">
                    <CardTitle icon="user">운행일지 작성 사용자</CardTitle>
                    <p className="flex-1 flex items-center justify-center pl-7 text-[24px] leading-[44px]">
                      <Num>9</Num>
                      <span className="mx-[10px]">/ 42 명</span>
                      <span className="text-[18px] font-medium text-[#718096]">(21%)</span>
                    </p>
                  </article>
                  <article className="flex justify-between pl-6 pr-[69px] rounded-xl bg-[#f9fafc]">
                    <div>
                      <CardTitle icon="page">운행 목적별 비율</CardTitle>
                      <Stat label="총 운행 수" className="mt-14">
                        <Num>102</Num>
                        <Unit>건</Unit>
                      </Stat>
                    </div>
                    <div className="flex items-center gap-[50px]">
                      <Donut
                        segments={[[54, 75, 0.5, 352.5, 3, TEAL]]}
                        sliver="#e0523f"
                        label="97%"
                        color={TEAL}
                      />
                      <Legend
                        rows={[
                          ["일반업무", "97%", "bg-[#4592b0]"],
                          ["출·퇴근", "0%", "bg-[#ffc56e]"],
                          ["비업무용", "1%", "bg-[#e0523f]"],
                          ["미선택", "0%", "bg-[#8c2f2b]"],
                        ]}
                      />
                    </div>
                  </article>
                </div>

                <div className="grid grid-cols-2 gap-3 min-h-[249px]">
                  <article className="flex justify-between pl-6 pr-[45px] rounded-xl bg-[#f9fafc]">
                    <div>
                      <CardTitle icon="clock">운행 시간 비율</CardTitle>
                      <Stat label="총 운행 시간" className="mt-[82px]">
                        <Num>78</Num>
                        <Unit>시간</Unit>
                        <Num>31</Num>
                        <Unit>분</Unit>
                      </Stat>
                    </div>
                    <div className="flex items-center gap-[50px]">
                      <Donut
                        segments={[
                          [19, 72, 76, 360, 5, "#cad4df"],
                          [22, 80, 0, 76, 6, TEAL],
                        ]}
                      />
                      <Legend
                        rows={[
                          ["차량 운행", "21%", "bg-[#4592b0]"],
                          ["운행 이 외", "79%", "bg-[#cad4df]"],
                        ]}
                      />
                    </div>
                  </article>
                  <article className="flex pl-6 pr-[17px] rounded-xl bg-[#f9fafc]">
                    <div className="w-[227px] shrink-0">
                      <CardTitle icon="ruler">거리별 운행 수</CardTitle>
                      <Stat label="총 운행 거리" className="mt-[91px]">
                        <Num>858</Num>
                        <Unit>km</Unit>
                      </Stat>
                    </div>
                    <DistanceChart />
                  </article>
                </div>

                <Summary className="min-h-[158px]">
                  <>
                    전체 운행 102건 중 &nbsp;<b className="font-semibold">99건(97%)을 일반 업무용</b>으로 운행했습니다.{" "}
                    <Icon name="thumb" className="inline align-[-5px]" />
                  </>
                  <>
                    운행 일지를 작성한 직원 9명의 전체 근무 360시간 중 &nbsp;
                    <b className="font-semibold">78시간(21%)을 차량 이동</b>으로 사용 중입니다.{" "}
                    <Icon name="thumb" className="inline align-[-5px]" />
                  </>
                  <>
                    이번 주 총 &nbsp;<b className="font-semibold">858km를 이동</b>했습니다. (1일 평균 122km 이동)
                  </>
                </Summary>
              </div>
              <Divider />
            </section>

            {/* 우리 회사 운행 패턴 */}
            <section className="px-[185px]">
              <SectionTitle>우리 회사 운행 패턴</SectionTitle>
              <div className="flex flex-col gap-[22px]">
                <article className="flex pl-6 rounded-xl bg-[#f9fafc]">
                  <div className="w-[279px] shrink-0">
                    <CardTitle icon="calendar">운행 목적별 운행 패턴</CardTitle>
                  </div>
                  <PurposeChart />
                  <ul className="w-[150px] shrink-0 pl-2 pt-[53px] text-[18px]">
                    {[
                      ["일반업무", "bg-[#4592b0]"],
                      ["출•퇴근", "bg-[#ffc56e]"],
                      ["비업무용", "bg-[#e0523f]"],
                      ["미선택", "bg-[#8c2f2b]"],
                    ].map(([name, dot]) => (
                      <li key={name} className="flex items-center gap-2 h-[38px]">
                        <span className={"w-[14px] h-[14px] rounded-full " + dot} />
                        {name}
                      </li>
                    ))}
                  </ul>
                </article>

                <div className="grid grid-cols-[1007fr_524fr] gap-[22px]">
                  <div className="flex flex-col gap-[22px]">
                    <article className="flex px-6 rounded-xl bg-[#f9fafc]">
                      <div className="w-[199px] shrink-0">
                        <CardTitle icon="chart">주간 운행 패턴</CardTitle>
                      </div>
                      <WeekChart />
                    </article>
                    <RunCard
                      icon="clock"
                      title="1회 운행 시간"
                      values={[
                        <>
                          <Num>7</Num>
                          <Unit>시간</Unit>
                          <Num>44</Num>
                          <Unit>분</Unit>
                        </>,
                        <>
                          <Num>46</Num>
                          <Unit>분</Unit>
                        </>,
                        <>
                          <Num>0</Num>
                          <Unit>분</Unit>
                        </>,
                      ]}
                      bars={[
                        [472, 7, "7시간 44분"],
                        [48, 26, "46분"],
                        [0, 30, "0분"],
                      ]}
                    />
                    <RunCard
                      icon="ruler"
                      title="1회 운행 거리"
                      values={[134, 8, 0].map((v) => (
                        <>
                          <Num>{v}</Num>
                          <Unit>km</Unit>
                        </>
                      ))}
                      bars={[
                        [426, 19, "134km"],
                        [26, 26, "8km"],
                        [0, 27, "0km"],
                      ]}
                    />
                  </div>
                  <article className="px-6 rounded-xl bg-[#f9fafc]">
                    <CardTitle icon="pin">도착지 패턴</CardTitle>
                    <KoreaMap />
                  </article>
                </div>

                <Summary className="min-h-[157px]">
                  <>
                    <b className="font-medium">18시~19시</b>사이 &nbsp;<b className="font-semibold">일반업무</b>
                    <span className="text-[#718096]">(31건)</span>, &nbsp;<b className="font-semibold">출•퇴근</b>
                    <span className="text-[#718096]">(0건)</span>, &nbsp;<b className="font-semibold">비업무용</b>
                    <span className="text-[#718096]">(0건)</span>, &nbsp;<b className="font-semibold">미선택</b>
                    <span className="text-[#718096]">(0건)</span>순으로 많습니다.
                  </>
                  <>
                    <b className="font-semibold">평균 1회 운행 시간은 &nbsp;46분</b>입니다.
                  </>
                  <>
                    <b className="font-semibold">평균 1회 운행 거리는 &nbsp;8km</b>입니다.
                  </>
                </Summary>
              </div>
              <Divider />
            </section>

            {/* 주간 지출 */}
            <section className="px-[185px]">
              <SectionTitle>주간 지출</SectionTitle>
              <div className="flex flex-col gap-[22px]">
                <div className="grid grid-cols-2 gap-3 min-h-[273px]">
                  <article className="flex justify-between pl-6 pr-[25px] rounded-xl bg-[#f9fafc]">
                    <div>
                      <CardTitle icon="card">지출 비율</CardTitle>
                      <Stat label="총 지출 금액" className="mt-[90px]">
                        <Num>50,000</Num>
                        <Unit>원</Unit>
                      </Stat>
                    </div>
                    <div className="pt-[63px]">
                      <div className="flex items-center gap-[60px] pr-5">
                        <Donut segments={[[54, 75, 0, 360, 4, "#ef4444"]]} label="100%" color="#ef4444" />
                        <Legend
                          rows={[
                            ["차량지출", "100%", "bg-[#ef4444]", "text-[#ef4444]"],
                            ["일반지출", "0%", "bg-[#3b82f6]", "text-[#3b82f6] font-medium"],
                            ["정비지출", "0%", "bg-[#f97316]", "text-[#f97316] font-medium"],
                          ]}
                        />
                      </div>
                      <p className="mt-[9px] text-right text-[16px] leading-6 text-[#718096]">*승인된 지출만 집계됩니다.</p>
                    </div>
                  </article>
                  <article className="flex justify-between pl-6 pr-[45px] rounded-xl bg-[#f9fafc]">
                    <div>
                      <CardTitle icon="check">결재 현황</CardTitle>
                      <Stat label="총 지출 건수" className="mt-[90px]">
                        <Num>2</Num>
                        <Unit>건</Unit>
                      </Stat>
                    </div>
                    <div className="flex items-start gap-[70px] pt-[63px]">
                      <Donut
                        segments={[
                          [53, 75, 0, 180, 4, "#48bb78"],
                          [55, 72, 180, 360, 6, "#4593e1"],
                        ]}
                        label="50%"
                        color="#48bb78"
                      />
                      <div className="pt-[23px]">
                        <Legend
                          rows={[
                            ["승인", "1건", "bg-[#48bb78]", "text-[#48bb78]"],
                            ["승인대기", "1건", "bg-[#4593e1]", "text-[#4593e1] font-medium"],
                            ["반려", "0건", "bg-[#f56565]", "text-[#f56565]"],
                          ]}
                        />
                      </div>
                    </div>
                  </article>
                </div>

                <div className="grid grid-cols-2 gap-3 min-h-[308px]">
                  <article className="flex pl-6 pr-[25px] rounded-xl bg-[#f9fafc]">
                    <div className="w-[239px] shrink-0">
                      <CardTitle icon="chart">주간 지출 현황</CardTitle>
                    </div>
                    <div className="flex-1 min-w-0">
                      <SpendChart />
                      <p className="text-right text-[16px] leading-6 text-[#718096]">*승인된 지출만 집계됩니다.</p>
                    </div>
                  </article>
                  <article className="flex pl-6 pr-[25px] rounded-xl bg-[#f9fafc]">
                    <div className="w-[285px] shrink-0">
                      <CardTitle icon="fuel">주간 평균 유가</CardTitle>
                      <dl className="w-[213px] mt-[22px] pl-3 text-[16px]">
                        {[
                          ["휘발유", "1,660", "text-[#d69e2e]"],
                          ["경유", "1,530", "text-[#38a169]"],
                          ["LPG", "1,000", "text-[#ea580c]"],
                        ].map(([name, price, color]) => (
                          <div key={name} className="flex items-center justify-between h-[60px]">
                            <dt className={"font-medium " + color}>{name}</dt>
                            <dd className="-mr-[5px] leading-[44px] whitespace-nowrap">
                              <Num color={color}>{price}</Num>
                              <Unit>원</Unit>
                            </dd>
                          </div>
                        ))}
                      </dl>
                    </div>
                    <div className="flex-1 min-w-0">
                      <FuelChart />
                      <p className="text-right text-[16px] leading-6 text-[#718096]">*자료출처: 한국석유공사</p>
                    </div>
                  </article>
                </div>

                <Summary className="min-h-[153px]">
                  <>
                    이번 주 &nbsp;<b className="font-semibold">총 지출은 &nbsp;50,000원</b>입니다.
                  </>
                  <>
                    <b className="font-semibold">결재 승인</b>이 필요한 지출은 &nbsp;<b className="font-semibold">1건</b> 있습니다.
                  </>
                  <>
                    <b className="font-semibold">1일 평균 지출</b>은 &nbsp;<b className="font-semibold">7,142원</b>입니다.
                  </>
                </Summary>
              </div>
            </section>
          </div>
        </div>
      </main>
    </div>
  );
};

export default App;
